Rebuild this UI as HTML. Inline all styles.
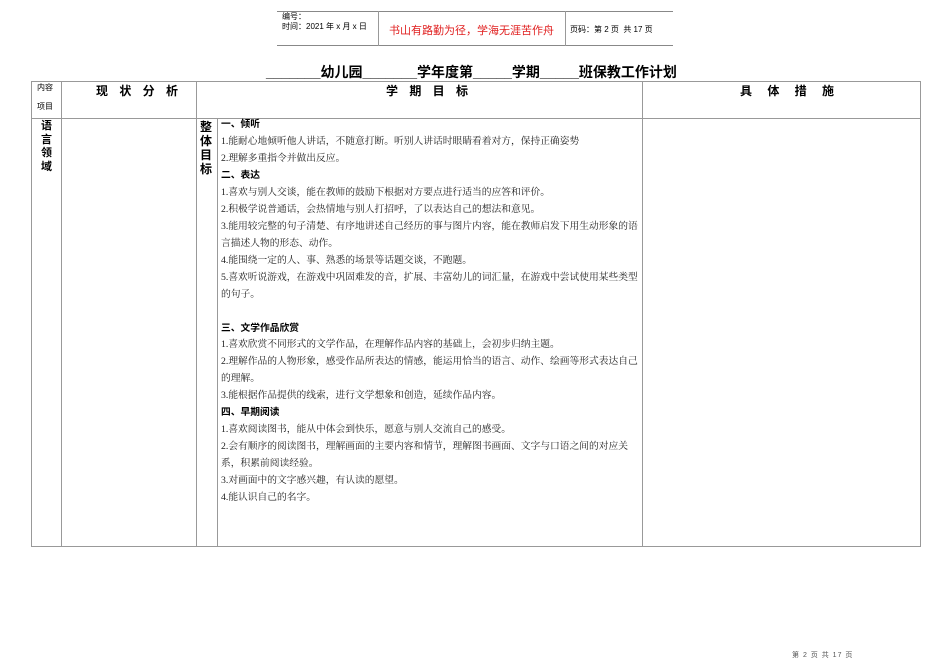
<!DOCTYPE html>
<html><head><meta charset="utf-8"><style>
*{margin:0;padding:0;box-sizing:border-box}
body{width:950px;height:672px;background:#fff;position:relative;overflow:hidden;font-family:"Liberation Sans","Noto Sans CJK SC",sans-serif;color:#000}
.a{position:absolute;white-space:nowrap}
.h{position:absolute;background:#999;height:1px}
.v{position:absolute;background:#999;width:1px}
.t{position:absolute;left:221px;font-family:"Liberation Serif","Noto Serif CJK SC",serif;font-size:9.75px;line-height:12px;color:#222;white-space:nowrap}
.b{font-weight:bold;font-family:"Liberation Sans","Noto Sans CJK SC",sans-serif;color:#000}
</style></head><body>
<div class="h" style="left:277px;top:11px;width:396px;background:#888"></div>
<div class="h" style="left:277px;top:45px;width:396px;background:#888"></div>
<div class="v" style="left:378px;top:11px;height:35px"></div>
<div class="v" style="left:565px;top:11px;height:35px"></div>
<div class="a" style="left:282px;top:12px;font-size:8px;line-height:10px">编号：<br>时间：2021 年 x 月 x 日</div>
<div class="a" style="left:389px;top:22px;font-size:11px;color:#e02020">书山有路勤为径，学海无涯苦作舟</div>
<div class="a" style="left:570px;top:24px;font-size:8px">页码：第 2 页&nbsp; 共 17 页</div>
<div class="a" style="left:266px;top:62px;font-size:14px;font-weight:bold">_______幼儿园_______学年度第_____学期_____班保教工作计划</div>

<div class="h" style="left:31px;top:81px;width:890px"></div>
<div class="h" style="left:31px;top:118px;width:890px"></div>
<div class="h" style="left:31px;top:546px;width:890px"></div>
<div class="v" style="left:31px;top:81px;height:466px"></div>
<div class="v" style="left:61px;top:81px;height:466px"></div>
<div class="v" style="left:196px;top:81px;height:466px"></div>
<div class="v" style="left:217px;top:118px;height:429px"></div>
<div class="v" style="left:642px;top:81px;height:466px"></div>
<div class="v" style="left:920px;top:81px;height:466px"></div>

<div class="a" style="left:37px;top:82px;font-size:8px">内容</div>
<div class="a" style="left:37px;top:101px;font-size:8px">项目</div>
<div class="a" style="left:96px;top:82px;font-size:12px;font-weight:bold;letter-spacing:4px">现 状 分 析</div>
<div class="a" style="left:386px;top:82px;font-size:12px;font-weight:bold;letter-spacing:4px">学 期 目 标</div>
<div class="a" style="left:740px;top:82px;font-size:12px;font-weight:bold;letter-spacing:6px">具 体 措 施</div>
<div class="a" style="left:41px;top:120px;font-size:11px;line-height:13.5px;font-weight:bold;white-space:normal;width:12px">语言领域</div>
<div class="a" style="left:200px;top:120px;font-size:12px;line-height:14px;font-weight:bold;white-space:normal;width:13px">整体目标</div>

<div class="t b" style="top:119px">一、倾听</div>
<div class="t" style="top:136px">1.能耐心地倾听他人讲话，不随意打断。听别人讲话时眼睛看着对方，保持正确姿势</div>
<div class="t" style="top:153px">2.理解多重指令并做出反应。</div>
<div class="t b" style="top:170px">二、表达</div>
<div class="t" style="top:187px">1.喜欢与别人交谈，能在教师的鼓励下根据对方要点进行适当的应答和评价。</div>
<div class="t" style="top:204px">2.积极学说普通话，会热情地与别人打招呼，了以表达自己的想法和意见。</div>
<div class="t" style="top:221px">3.能用较完整的句子清楚、有序地讲述自己经历的事与图片内容，能在教师启发下用生动形象的语</div>
<div class="t" style="top:238px">言描述人物的形态、动作。</div>
<div class="t" style="top:255px">4.能围绕一定的人、事、熟悉的场景等话题交谈，不跑题。</div>
<div class="t" style="top:272px">5.喜欢听说游戏，在游戏中巩固难发的音，扩展、丰富幼儿的词汇量，在游戏中尝试使用某些类型</div>
<div class="t" style="top:289px">的句子。</div>
<div class="t b" style="top:323px">三、文学作品欣赏</div>
<div class="t" style="top:339px">1.喜欢欣赏不同形式的文学作品，在理解作品内容的基础上，会初步归纳主题。</div>
<div class="t" style="top:356px">2.理解作品的人物形象，感受作品所表达的情感，能运用恰当的语言、动作、绘画等形式表达自己</div>
<div class="t" style="top:373px">的理解。</div>
<div class="t" style="top:390px">3.能根据作品提供的线索，进行文学想象和创造，延续作品内容。</div>
<div class="t b" style="top:407px">四、早期阅读</div>
<div class="t" style="top:424px">1.喜欢阅读图书，能从中体会到快乐，愿意与别人交流自己的感受。</div>
<div class="t" style="top:441px">2.会有顺序的阅读图书，理解画面的主要内容和情节，理解图书画面、文字与口语之间的对应关</div>
<div class="t" style="top:458px">系，积累前阅读经验。</div>
<div class="t" style="top:475px">3.对画面中的文字感兴趣，有认读的愿望。</div>
<div class="t" style="top:492px">4.能认识自己的名字。</div>

<div class="a" style="left:792px;top:650px;font-size:7px;color:#555;letter-spacing:1px">第 2 页 共 17 页</div>
</body></html>
